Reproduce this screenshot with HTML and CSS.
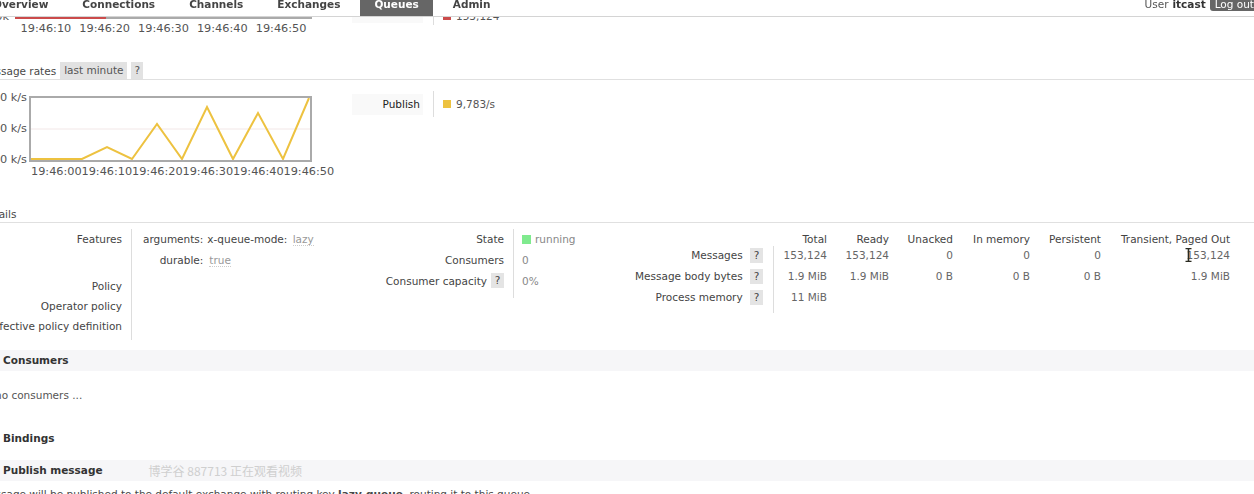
FILE: index.html
```html
<!DOCTYPE html>
<html lang="en">
<head>
    <meta charset="UTF-8">
    <meta name="viewport" content="width=device-width, initial-scale=1.0">
    <title>RabbitMQ Management - Queue lazy-queue</title>
    <link rel="stylesheet" href="styles.css">
</head>
<body>
    <div id="header">
        <ul class="menu">
            <li>Overview</li>
            <li>Connections</li>
            <li>Channels</li>
            <li>Exchanges</li>
            <li class="active">Queues</li>
            <li>Admin</li>
        </ul>
        <div class="login">User <b>itcast</b> <span class="logout">Log out</span></div>
    </div>

    <div id="main">
        <!-- queued messages chart, mostly scrolled under the menu -->
        <div class="chart-row">
            <div class="yaxis narrow">
                <span></span><span></span><span>0k</span>
            </div>
            <div class="chart-col queued">
                <svg class="plot" width="297" height="66" viewBox="0 0 297 66">
                    <rect x="1" y="1" width="295" height="64" fill="none" stroke="#aaa" stroke-width="2"/>
                    <polyline points="0,65 90,65 97,8 296,8" fill="none" stroke="#cb4b4b" stroke-width="2"/>
                </svg>
                <div class="xaxis wide">
                    <span>19:46:10</span><span>19:46:20</span><span>19:46:30</span><span>19:46:40</span><span>19:46:50</span>
                </div>
            </div>
            <div class="legend queued-legend">
                <div class="legend-row"><span class="legend-label"></span><span class="legend-value"><i class="swatch total"></i>153,124</span></div>
            </div>
        </div>

        <h3 class="rates-head">Message rates <span class="pill">last minute</span><span class="pill help">?</span></h3>
        <div class="chart-row rates">
            <div class="yaxis">
                <span>10 k/s</span><span>5.0 k/s</span><span>0 k/s</span>
            </div>
            <div class="chart-col">
                <svg class="plot" width="283" height="66" viewBox="0 0 283 66">
                    <line x1="2" y1="33" x2="281" y2="33" stroke="#f2e7e7" stroke-width="1"/>
                    <polyline points="1,63 53,63 78,51 103,63 128,28 153,63 178,11 204,63 229,17 254,63 280,2" fill="none" stroke="#edc240" stroke-width="2"/>
                    <rect x="1" y="1" width="281" height="64" fill="none" stroke="#aaa" stroke-width="2"/>
                </svg>
                <div class="xaxis">
                    <span>19:46:00</span><span>19:46:10</span><span>19:46:20</span><span>19:46:30</span><span>19:46:40</span><span>19:46:50</span>
                </div>
            </div>
            <div class="legend">
                <div class="legend-row"><span class="legend-label">Publish</span><span class="legend-value"><i class="swatch ready"></i>9,783/s</span></div>
            </div>
        </div>

        <h3 class="details-head">Details</h3>
        <div class="details">
            <div class="facts">
                <div class="th first">Features</div>
                <div class="td first">
                    <div class="args">
                        <div class="arg-key">arguments:</div>
                        <div class="arg-val">x-queue-mode: <abbr>lazy</abbr></div>
                        <div class="arg-key">durable:</div>
                        <div class="arg-val"><abbr>true</abbr></div>
                    </div>
                </div>
                <div class="th">Policy</div><div class="td"></div>
                <div class="th">Operator policy</div><div class="td"></div>
                <div class="th last">Effective policy definition</div><div class="td last"></div>
            </div>

            <div class="facts mid">
                <div class="th">State</div>
                <div class="td"><i class="state-ok"></i>running</div>
                <div class="th">Consumers</div>
                <div class="td">0</div>
                <div class="th last">Consumer capacity <span class="help-box">?</span></div>
                <div class="td last">0%</div>
            </div>

            <div class="stats">
                <div class="corner"></div>
                <div class="col-head">Total</div>
                <div class="col-head">Ready</div>
                <div class="col-head">Unacked</div>
                <div class="col-head">In memory</div>
                <div class="col-head">Persistent</div>
                <div class="col-head">Transient, Paged Out</div>

                <div class="row-head">Messages <span class="help-box">?</span></div>
                <div class="num first">153,124</div>
                <div class="num">153,124</div>
                <div class="num">0</div>
                <div class="num">0</div>
                <div class="num">0</div>
                <div class="num cursor-cell">153,124<span class="ibeam"><svg width="7" height="14" viewBox="0 0 7 14"><path d="M0.5 0.5h6M0.5 13.5h6M3.5 0.5v13" stroke="#2a2a20" stroke-width="1.6" fill="none"/></svg></span></div>

                <div class="row-head">Message body bytes <span class="help-box">?</span></div>
                <div class="num first">1.9 MiB</div>
                <div class="num">1.9 MiB</div>
                <div class="num">0 B</div>
                <div class="num">0 B</div>
                <div class="num">0 B</div>
                <div class="num">1.9 MiB</div>

                <div class="row-head last">Process memory <span class="help-box">?</span></div>
                <div class="num first last">11 MiB</div>
                <div class="num last"></div>
                <div class="num last"></div>
                <div class="num last"></div>
                <div class="num last"></div>
                <div class="num last"></div>
            </div>
        </div>

        <div class="section-head band">Consumers</div>
        <p class="empty">no consumers ...</p>

        <div class="section-head bindings">Bindings</div>

        <div class="section-head band publish">
            <span>Publish message</span>
            <span class="watermark">博学谷 887713 正在观看视频</span>
        </div>
        <p class="note">Message will be published to the default exchange with routing key <b>lazy-queue</b>, routing it to this queue.</p>
    </div>
</body>
</html>
```

FILE: styles.css
```css
* {
    margin: 0;
    padding: 0;
    box-sizing: border-box;
}

html, body {
    background: #fff;
}

body {
    font-family: "DejaVu Sans", Verdana, sans-serif;
    font-size: 10.5px;
    line-height: 14px;
    color: #484848;
    height: 494px;
    overflow: hidden;
}

#header {
    position: fixed;
    top: 0;
    left: 0;
    right: 0;
    height: 17px;
    background: #fff;
    border-bottom: 1px solid #d4d4d4;
    display: flex;
    justify-content: space-between;
    align-items: flex-start;
    z-index: 2;
}

.menu {
    list-style: none;
    display: flex;
    gap: 6px;
    margin: -6px 0 0 -21px;
}

.menu li {
    padding: 3px 14px 5px;
    font-weight: bold;
    color: #444;
    white-space: nowrap;
}

.menu li.active {
    background: #666;
    color: #fff;
}

.login {
    margin-top: -3px;
    display: flex;
    align-items: flex-start;
    gap: 4px;
    white-space: nowrap;
    color: #555;
}

.login b {
    color: #333;
}

.logout {
    background: #666;
    color: #fff;
    padding: 0 5px;
    border-radius: 0 0 3px 3px;
    margin-right: -5px;
}

/* page body, scrolled down and pushed past the left edge */
#main {
    margin: -52px 0 0 -40px;
}

.chart-row {
    display: flex;
    align-items: flex-start;
}

.chart-row.rates {
    margin-top: 11px;
}

.yaxis {
    flex: none;
    width: 69px;
    height: 74px;
    margin-top: 1px;
    padding-right: 2px;
    display: flex;
    flex-direction: column;
    justify-content: space-between;
    align-items: flex-end;
    font-size: 11.3px;
    line-height: 12px;
    color: #545454;
    white-space: nowrap;
}

.yaxis span {
    height: 12px;
}

.yaxis.narrow {
    width: 55px;
    padding-right: 6px;
}

.chart-col {
    flex: none;
    width: 283px;
    padding-top: 5px;
}

.chart-col.queued {
    width: 297px;
}

.plot {
    display: block;
}

.xaxis {
    display: flex;
    height: 19px;
    line-height: 19px;
    margin-left: 2px;
    font-size: 11.3px;
    color: #545454;
}

.xaxis span {
    flex: none;
    width: 50.5px;
    text-align: center;
}

.xaxis.wide {
    margin-left: 1.5px;
}

.xaxis.wide span {
    width: 58.8px;
}

.legend {
    margin-left: 40px;
    display: flex;
    flex-direction: column;
}

.queued-legend {
    margin-top: 51px;
}

.legend-row {
    display: flex;
    align-items: center;
    height: 26px;
}

.legend-label {
    width: 71px;
    height: 21px;
    line-height: 21px;
    padding-right: 3px;
    text-align: right;
    background: #f9f9f9;
    color: #222;
}

.legend-value {
    height: 26px;
    margin-left: 10px;
    padding-left: 9px;
    border-left: 1px solid #ddd;
    display: flex;
    align-items: center;
    gap: 5px;
    color: #555;
}

.queued-legend .legend-value {
    align-items: flex-end;
    padding-bottom: 2px;
}

.queued-legend .swatch {
    margin-bottom: 3px;
}

.swatch {
    display: inline-block;
    width: 8px;
    height: 8px;
}

.swatch.ready { background: #edc240; }
.swatch.total { background: #cb4b4b; }

/* h3 headings with underline */
h3 {
    font-size: 10.5px;
    font-weight: normal;
    height: 18px;
    padding-left: 20px;
    border-bottom: 1px solid #e0e0e0;
    display: flex;
    align-items: center;
    gap: 4px;
    color: #484848;
    white-space: nowrap;
}

.rates-head {
    margin-top: 24px;
}

.details-head {
    margin-top: 24px;
}

.pill {
    height: 17px;
    line-height: 17px;
    padding: 0 4px;
    background: #e2e2e2;
    color: #555;
}

.pill.help {
    padding: 0 3px;
}

/* details tables */
.details {
    display: flex;
    align-items: flex-start;
    margin-top: 6px;
    height: 121px;
}

.facts {
    display: grid;
    grid-template-columns: 171px 209px;
}

.facts .th {
    padding: 3px 9px 3px 0;
    text-align: right;
    white-space: nowrap;
    display: flex;
    justify-content: flex-end;
    color: #444;
}

.facts .td {
    padding: 3px 0 3px 11px;
    border-left: 1px solid #ddd;
    color: #888;
}

.facts .first {
    padding-bottom: 2px;
}

.facts .last {
    padding-bottom: 7px;
}

.args {
    display: grid;
    grid-template-columns: auto 1fr;
    column-gap: 4px;
}

.arg-key,
.arg-val {
    padding-bottom: 7px;
    color: #444;
    white-space: nowrap;
}

.arg-key {
    text-align: right;
}

abbr {
    text-decoration: none;
    color: #999;
    border-bottom: 1px dotted #ccc;
    margin-left: 2px;
}

.facts.mid {
    grid-template-columns: 173px 107px;
}

.facts.mid .th,
.facts.mid .td {
    padding-top: 3px;
    padding-bottom: 4px;
}

.facts.mid .td {
    padding-left: 8px;
    display: flex;
    align-items: center;
    gap: 4px;
    height: 21px;
}

.facts.mid .last {
    padding-bottom: 10px;
    height: 27px;
    align-items: flex-start;
}

.facts.mid .th.last {
    align-items: flex-start;
}

.state-ok {
    display: inline-block;
    width: 9px;
    height: 9px;
    background: #7fea8e;
}

.help-box {
    display: inline-block;
    width: 13px;
    height: 15px;
    line-height: 15px;
    margin: -1px 0 -1px 4px;
    text-align: center;
    background: #e4e4e4;
    color: #444;
}

.stats {
    display: grid;
    grid-template-columns: 153px 54px 62px 64px 77px 71px 129px;
}

.col-head {
    padding-top: 3px;
    text-align: right;
    white-space: nowrap;
    color: #444;
}

.row-head {
    padding: 1px 10px 4px 0;
    line-height: 16px;
    text-align: right;
    white-space: nowrap;
    color: #444;
}

.num {
    padding: 1px 0 4px;
    line-height: 16px;
    text-align: right;
    white-space: nowrap;
    color: #666;
}

.num.first {
    border-left: 1px solid #ddd;
}

.stats .last {
    padding-bottom: 8px;
}

.cursor-cell {
    position: relative;
}

.ibeam {
    position: absolute;
    left: 84px;
    top: 2px;
    width: 7px;
    height: 14px;
    line-height: 0;
}

/* collapsible sections */
.section-head {
    height: 21px;
    line-height: 21px;
    padding-left: 43px;
    font-weight: bold;
    color: #333;
    white-space: nowrap;
}

.band {
    background: #f6f6f8;
}

.empty {
    margin-top: 17px;
    padding-left: 35px;
    color: #555;
}

.bindings {
    margin-top: 26px;
}

.publish {
    margin-top: 11px;
    display: flex;
    gap: 46px;
}

.watermark {
    font-family: "Noto Sans CJK SC", "DejaVu Sans", sans-serif;
    font-size: 12px;
    font-weight: normal;
    color: #cfcfcf;
}

.note {
    margin-top: 6px;
    padding-left: 20px;
    white-space: nowrap;
    color: #484848;
}
```
